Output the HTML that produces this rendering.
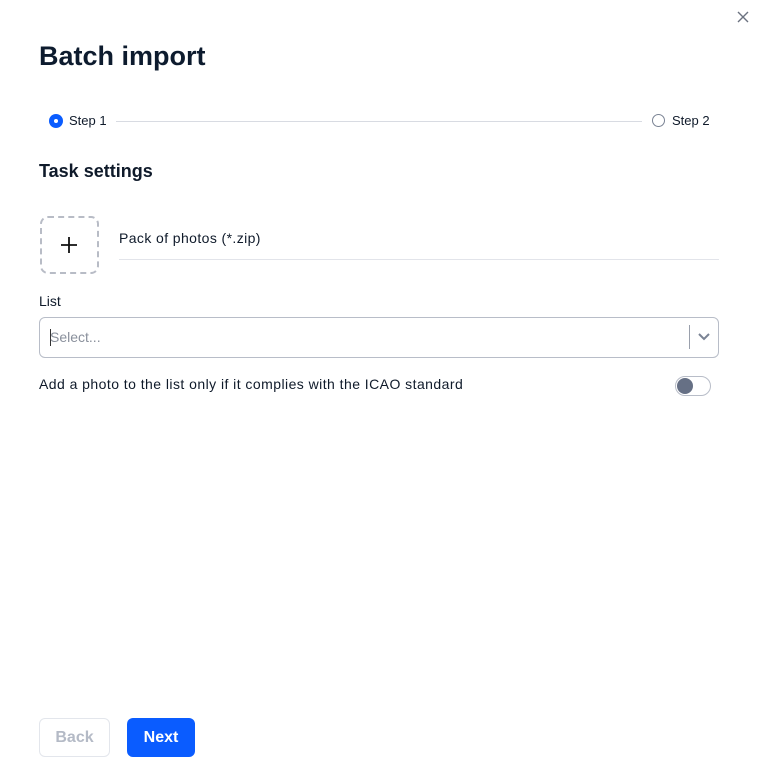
<!DOCTYPE html>
<html><head><style>
*{box-sizing:border-box;margin:0;padding:0}
body{width:758px;height:774px;background:#fff;font-family:"Liberation Sans",sans-serif;color:#0f1a2a;position:relative;overflow:hidden}
.a{position:absolute}
</style></head><body>
<svg class="a" style="left:736px;top:10px" width="14" height="14" viewBox="0 0 14 14"><path d="M2 2L12 12M12 2L2 12" stroke="#6b7280" stroke-width="1.4"/></svg>
<div class="a" style="left:39px;top:41px;font-size:27px;font-weight:bold;color:#0d1b2e">Batch import</div>
<div class="a" style="left:49px;top:114px;width:14px;height:14px;border-radius:50%;background:#0a5cff"></div>
<div class="a" style="left:54px;top:119px;width:4px;height:4px;border-radius:50%;background:#fff"></div>
<div class="a" style="left:69px;top:113px;font-size:13px">Step 1</div>
<div class="a" style="left:116px;top:121px;width:526px;height:1px;background:#d8dbe2"></div>
<div class="a" style="left:652px;top:114px;width:13px;height:13px;border-radius:50%;border:1px solid #7a8394"></div>
<div class="a" style="left:672px;top:113px;font-size:13px">Step 2</div>
<div class="a" style="left:39px;top:161px;font-size:18px;font-weight:bold">Task settings</div>
<div class="a" style="left:40px;top:216px;width:59px;height:58px;border:2px dashed #b8bcc6;border-radius:8px"></div>
<svg class="a" style="left:60px;top:236px" width="18" height="18"><path d="M9 1V17M1 9H17" stroke="#111" stroke-width="1.8"/></svg>
<div class="a" style="left:119px;top:230px;font-size:14px;letter-spacing:0.4px">Pack of photos (*.zip)</div>
<div class="a" style="left:119px;top:259px;width:600px;height:1px;background:#e2e4ea"></div>
<div class="a" style="left:39px;top:293px;font-size:14px">List</div>
<div class="a" style="left:39px;top:317px;width:680px;height:41px;border:1px solid #b8bdc8;border-radius:6px"></div>
<div class="a" style="left:50px;top:329px;width:1px;height:17px;background:#333"></div>
<div class="a" style="left:50px;top:329px;font-size:14px;color:#8a909c">Select...</div>
<div class="a" style="left:689px;top:325px;width:1px;height:24px;background:#9aa0ac"></div>
<svg class="a" style="left:698px;top:333px" width="12" height="8"><path d="M1 1L6 6L11 1" stroke="#7a8394" stroke-width="2" fill="none"/></svg>
<div class="a" style="left:39px;top:376px;font-size:14px;letter-spacing:0.45px">Add a photo to the list only if it complies with the ICAO standard</div>
<div class="a" style="left:675px;top:376px;width:36px;height:20px;border:1px solid #b8bdc8;border-radius:10px"></div>
<div class="a" style="left:677px;top:378px;width:16px;height:16px;border-radius:50%;background:#667085"></div>
<div class="a" style="left:39px;top:718px;width:71px;height:39px;border:1px solid #e3e6ec;border-radius:6px;color:#b4bac6;font-size:16px;text-align:center;line-height:37px;font-weight:bold">Back</div>
<div class="a" style="left:127px;top:718px;width:68px;height:39px;background:#0a5cff;border-radius:6px;color:#fff;font-size:16px;text-align:center;line-height:39px;font-weight:bold">Next</div>
</body></html>
